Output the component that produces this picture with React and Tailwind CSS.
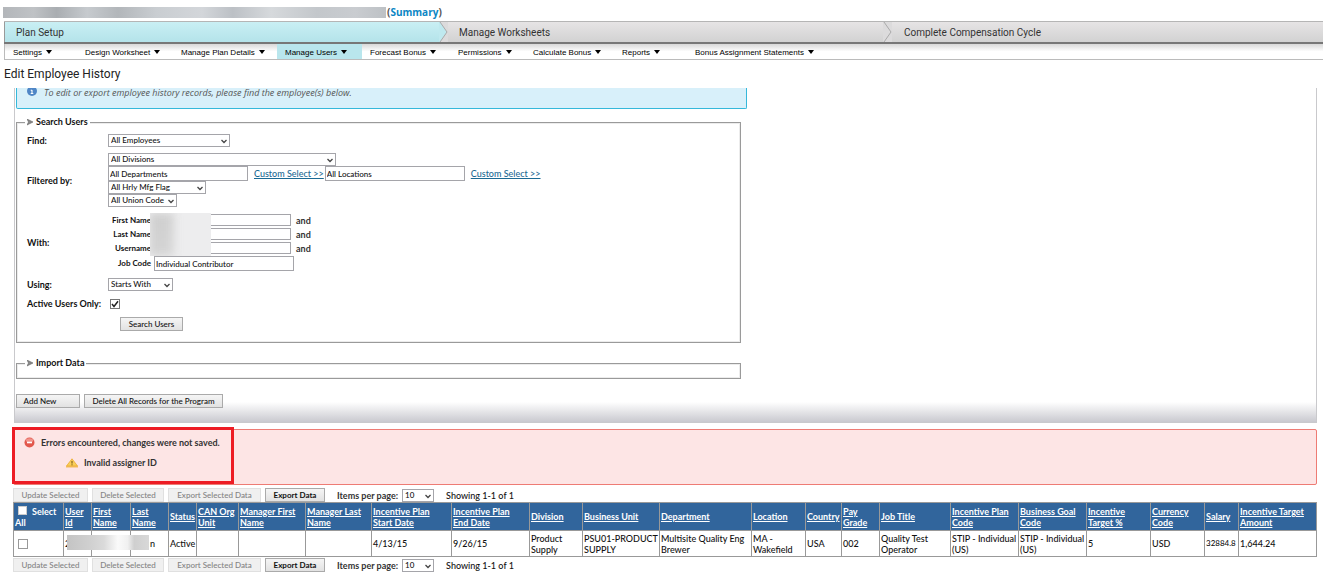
import clsx from 'clsx';

const menu = [
  { label: 'Settings', width: 'w-[72px]' },
  { label: 'Design Worksheet', width: 'w-[96px]' },
  { label: 'Manage Plan Details', width: 'w-[104px]' },
  { label: 'Manage Users', width: 'w-[85px]', active: true },
  { label: 'Forecast Bonus', width: 'w-[88px]' },
  { label: 'Permissions', width: 'w-[75px]' },
  { label: 'Calculate Bonus', width: 'w-[89px]' },
  { label: 'Reports', width: 'w-[73px]' },
  { label: 'Bonus Assignment Statements', width: 'w-[140px]' },
];

// One entry per table column. An empty cell is a field with no value.
const columns = [
  { head: 'User Id', width: 'w-[28px]', cell: '2' },
  { head: 'First Name', width: 'w-[39px]', cell: '' },
  { head: 'Last Name', width: 'w-[38px]', cell: 'n', right: true },
  { head: 'Status', width: 'w-[28px]', cell: 'Active' },
  { head: 'CAN Org Unit', width: 'w-[42px]', cell: '' },
  { head: 'Manager First Name', width: 'w-[67px]', cell: '' },
  { head: 'Manager Last Name', width: 'w-[66px]', cell: '' },
  { head: 'Incentive Plan\nStart Date', width: 'w-[80px]', cell: '4/13/15' },
  { head: 'Incentive Plan\nEnd Date', width: 'w-[78px]', cell: '9/26/15' },
  { head: 'Division', width: 'w-[53px]', cell: 'Product Supply' },
  { head: 'Business Unit', width: 'w-[77px]', cell: 'PSU01-PRODUCT SUPPLY' },
  { head: 'Department', width: 'w-[92px]', cell: 'Multisite Quality Eng Brewer' },
  { head: 'Location', width: 'w-[54px]', cell: 'MA - Wakefield' },
  { head: 'Country', width: 'w-[36px]', cell: 'USA' },
  { head: 'Pay Grade', width: 'w-[38px]', cell: '002' },
  { head: 'Job Title', width: 'w-[71px]', cell: 'Quality Test Operator' },
  { head: 'Incentive Plan Code', width: 'w-[68px]', cell: 'STIP - Individual (US)' },
  { head: 'Business Goal Code', width: 'w-[68px]', cell: 'STIP - Individual (US)' },
  { head: 'Incentive Target %', width: 'w-[64px]', cell: '5' },
  { head: 'Currency Code', width: 'w-[54px]', cell: 'USD' },
  { head: 'Salary', width: 'w-[34px]', cell: '32884.8', small: true },
  { head: 'Incentive Target Amount', width: 'w-[78px]', cell: '1,644.24' },
];

export default function App() {
  return (
    <div className="bg-white font-['Lato',sans-serif] text-[9px] leading-[11px] font-medium text-[#111]">
      <header className="flex h-[21px] items-center gap-px pt-[3px] pl-[3px]">
        <div className="h-[11px] w-[383px] bg-[linear-gradient(to_right,#b3b6ba_0%,#bfc2c5_8%,#a9adb1_14%,#c6cace_22%,#b2b6ba_30%,#c9cdd1_40%,#d3d6da_52%,#bcc0c5_60%,#d6d9dc_70%,#c3c7cb_82%,#c9ccd0_92%,#bdc1c5_100%)]" />
        <span className="font-['Open_Sans',sans-serif] text-[10px] font-bold text-[#555]">
          (<a href="#summary" className="text-[#0b86c4]">Summary</a>)
        </span>
      </header>

      <div className="ml-1">
        <Steps />
        <nav className="flex h-4 border-b border-l border-[#bbb] bg-linear-to-b from-[#d8d8d8] via-white via-50% to-white font-['Liberation_Sans',sans-serif] text-[8px] font-normal">
          {menu.map((m) => (
            <button
              key={m.label}
              type="button"
              className={clsx(
                'flex items-center gap-1 pt-px pl-2 whitespace-nowrap text-black',
                m.width,
                m.active && 'bg-[#b9e6ed]'
              )}
            >
              {m.label}
              <svg width="6" height="4" viewBox="0 0 6 4" aria-hidden="true">
                <path d="M0 0h6L3 4z" fill="#000" />
              </svg>
            </button>
          ))}
        </nav>
      </div>

      <h1 className="pl-1 pt-[7px] font-['Roboto',sans-serif] text-[12px] leading-[14px] font-normal text-[#222]">
        Edit Employee History
      </h1>

      <main className="mr-[6px] ml-[13px] pt-[7px]">
        <section className="ml-px border-x border-b border-[#c9c9cc] bg-[linear-gradient(to_top,#c9c9cf_0,#ffffff_20px)] pl-px">
          <div className="flex h-[21px] w-[731px] items-start gap-[7px] rounded-b-xs border-x border-b border-[#35b8da] bg-[#d8f0fa] pl-[10px]">
            <InfoIcon />
            <p className="font-['Open_Sans',sans-serif] leading-[9px] font-normal text-[#555] italic">
              To edit or export employee history records, please find the employee(s) below.
            </p>
          </div>

          <div className="w-[726px] pt-[7px]">
            <Panel title="Search Users">
              <SearchForm />
            </Panel>
            <div className="pt-[14px]">
              <Panel title="Import Data">
                <div className="h-[9px]" />
              </Panel>
            </div>
          </div>

          <div className="flex gap-1 pt-[15px] pb-[14px]">
            <Btn className="w-16 pr-4">Add New</Btn>
            <Btn className="w-[139px]">Delete All Records for the Program</Btn>
          </div>
        </section>

        <section role="alert" className="relative mt-[6px] h-[56px] rounded-xs border border-[#ee7b74] bg-[#fde5e5] pt-[7px]">
          <div className="flex items-center gap-[6px] pl-[10px] font-bold text-[#333]">
            <ErrorIcon />
            <span>Errors encountered, changes were not saved.</span>
          </div>
          <div className="flex items-center gap-[6px] pt-[9px] pl-[52px] font-bold text-[#333]">
            <WarnIcon />
            <span>Invalid assigner ID</span>
          </div>
          <div className="pointer-events-none absolute -top-[3px] -left-[2px] h-[57px] w-[222px] border-3 border-[#ed1c24]" />
        </section>

        <Toolbar id="items-top" className="pt-[3px]" />
        <Records />
        <Toolbar id="items-bottom" className="pt-px" />
      </main>
    </div>
  );
}

function Steps() {
  return (
    <ol className="flex h-[23px] border-t border-b-2 border-t-[#b5b5b5] border-b-[#777] bg-linear-to-b from-[#e6e4e5] to-[#d2d2d2] font-['Roboto',sans-serif] text-[10px] font-normal text-[#333]">
      <li className="flex w-[444px] items-center border-l border-[#999] bg-linear-to-b from-[#c9eff4] to-[#b4e3ea]">
        <span className="flex-1 pl-[11px]">Plan Setup</span>
        <StepArrow fill="#bfe9ef" />
      </li>
      <li className="flex w-[444px] items-center">
        <span className="flex-1 pl-[11px]">Manage Worksheets</span>
        <StepArrow fill="none" />
      </li>
      <li className="flex flex-1 items-center pl-3">Complete Compensation Cycle</li>
    </ol>
  );
}

function StepArrow({ fill }) {
  return (
    <svg width="9" height="20" viewBox="0 0 9 20" aria-hidden="true">
      <path d="M0 0h9v20H0z" fill="#dcdbdc" />
      <path d="M0 0h1l7 10-7 10H0z" fill={fill} />
      <path d="M1 0l7 10-7 10" fill="none" stroke="#aaa" />
    </svg>
  );
}

function Panel({ title, children }) {
  return (
    <fieldset className="mr-px border border-[#9a9a9a] shadow-[inset_0_0_0_1px_#ececec]">
      <legend className="ml-2 flex items-center gap-[3px] bg-white px-[2px] leading-[12px] font-bold">
        <svg width="6" height="7" viewBox="0 0 6 7" aria-hidden="true">
          <path d="M0 0l6 3-6 3 1.500-3z" fill="#888" stroke="#666" strokeWidth=".6" />
        </svg>
        {title}
      </legend>
      {children}
    </fieldset>
  );
}

function SearchForm() {
  return (
    <form className="grid grid-cols-[81px_1fr] items-center pt-[6px] pb-[11px] pl-[10px]">
      <label htmlFor="find" className="font-bold">Find:</label>
      <Select id="find" width="w-[122px]" value="All Employees" />

      <span className="pt-[6px] font-bold">Filtered by:</span>
      <div className="pt-[6px]">
        <Select label="Divisions" width="w-[228px]" value="All Divisions" />
        <div className="flex items-center">
          <TextBox label="Departments" className="h-[15px] w-[140px]" value="All Departments" />
          <CustomSelect className="pr-px pl-[6px]" />
          <TextBox label="Locations" className="h-[15px] w-[140px]" value="All Locations" />
          <CustomSelect className="pl-[6px]" />
        </div>
        <Select label="Hrly Mfg Flag" width="w-[98px]" value="All Hrly Mfg Flag" />
        <Select label="Union Code" width="w-[69px]" value="All Union Code" />
      </div>

      <span className="pt-[6px] font-bold">With:</span>
      <div className="relative flex flex-col gap-[2px] pt-[7px]">
        <NameRow id="first" label="First Name" />
        <NameRow id="last" label="Last Name" />
        <NameRow id="user" label="Username" />
        <div className="flex items-center gap-[3px]">
          <label htmlFor="job" className="w-[43px] text-right text-[8px] font-bold">Job Code</label>
          <TextBox id="job" className="h-[15px] w-[140px]" value="Individual Contributor" />
        </div>
        {/* privacy mask over the employee's names */}
        <div className="absolute top-[6px] left-[42px] h-[43px] w-[61px] overflow-hidden bg-[#ededee]">
          <div className="h-full w-6 bg-linear-to-br from-[#ccc] to-[#d8d8d8] blur-[4px]" />
        </div>
      </div>

      <label htmlFor="using" className="pt-[7px] font-bold">Using:</label>
      <div className="pt-[7px]">
        <Select id="using" width="w-[65px]" value="Starts With" />
      </div>

      <label htmlFor="active" className="pt-[7px] font-bold whitespace-nowrap">Active Users Only:</label>
      <div className="flex pt-[7px] pl-[2px]">
        <span className="relative flex">
          <input
            id="active"
            type="checkbox"
            defaultChecked
            className="peer size-[10px] appearance-none border border-[#777] bg-white"
          />
          <svg className="pointer-events-none absolute inset-0 hidden peer-checked:block" width="10" height="10" viewBox="0 0 10 10" aria-hidden="true">
            <path d="M2 5l2 2.500L8 2.200" fill="none" stroke="#222" strokeWidth="1.500" />
          </svg>
        </span>
      </div>

      <div className="col-start-2 pt-2 pl-3">
        <Btn className="w-[63px]">Search Users</Btn>
      </div>
    </form>
  );
}

function NameRow({ id, label }) {
  return (
    <div className="flex h-3 items-center gap-[3px] font-bold text-[#333]">
      <label htmlFor={id} className="flex w-[43px] justify-end text-[8px] whitespace-nowrap text-[#111]">{label}</label>
      <TextBox id={id} className="h-3 w-[137px]" value="" />
      <span className="pl-[2px]">and</span>
    </div>
  );
}

function TextBox({ id, label, value, className }) {
  return (
    <input
      id={id}
      type="text"
      aria-label={label}
      defaultValue={value}
      className={clsx('border border-[#a5a5aa] bg-white px-px text-[8px] font-medium text-[#111]', className)}
    />
  );
}

function CustomSelect({ className }) {
  return (
    <span className={className}>
      <a href="#custom" className="text-[#1c6a94] underline">Custom Select &gt;&gt;</a>
    </span>
  );
}

function Select({ id, label, value, width }) {
  return (
    <div className={clsx('relative', width)}>
      <select
        id={id}
        aria-label={label}
        className="block h-[13px] w-full appearance-none border border-[#a5a5aa] bg-white pl-[2px] text-[8px]"
      >
        <option>{value}</option>
      </select>
      <svg className="pointer-events-none absolute top-[5px] right-[3px]" width="6" height="5" viewBox="0 0 6 5" aria-hidden="true">
        <path d="M.5 1L3 3.500 5.500 1" fill="none" stroke="#444" strokeWidth="1.300" />
      </svg>
    </div>
  );
}

function Btn({ children, className, disabled }) {
  return (
    <button
      type="button"
      disabled={disabled}
      className={clsx(
        'flex h-[14px] items-center justify-center border text-[8px] whitespace-nowrap',
        disabled ? 'border-[#e0e0e0] bg-[#f0f0f0] text-[#838383]' : 'border-[#aaa] bg-linear-to-b from-[#f5f5f5] to-[#e2e2e2]',
        className
      )}
    >
      {children}
    </button>
  );
}

function Toolbar({ id, className }) {
  return (
    <div className={clsx('flex items-center gap-1', className)}>
      <Btn disabled className="w-[75px]">Update Selected</Btn>
      <Btn disabled className="w-[72px]">Delete Selected</Btn>
      <Btn disabled className="w-[93px]">Export Selected Data</Btn>
      <Btn className="w-[60px] font-bold">Export Data</Btn>
      <label htmlFor={id} className="pl-2 font-bold text-[#333]">Items per page:</label>
      <Select id={id} width="w-[32px]" value="10" />
      <span className="pl-2">Showing 1-1 of 1</span>
    </div>
  );
}

function Records() {
  return (
    <div className="relative">
      <table className="w-full table-fixed border-collapse text-left">
        <colgroup>
          <col className="w-[50px]" />
          {columns.map((c) => (
            <col key={c.head} className={c.width} />
          ))}
        </colgroup>
        <thead>
          <tr className="h-[28px] bg-[#31659c] text-white">
            <th className="border border-[#999] p-0 pl-px font-bold">
              <label>
                <input type="checkbox" className="mr-[5px] ml-[3px] size-[9px] appearance-none border border-[#ccc] bg-white" />
                Select All
              </label>
            </th>
            {columns.map((c) => (
              <th key={c.head} className="border border-[#999] p-0 pl-px font-bold whitespace-pre-line">
                <a href="#sort" className="underline">{c.head}</a>
              </th>
            ))}
          </tr>
        </thead>
        <tbody>
          <tr className="h-[26px]">
            <td className="border border-[#999] p-0 pl-1">
              <input type="checkbox" aria-label="Select record" className="block size-[10px] appearance-none border border-[#999] bg-white" />
            </td>
            {columns.map((c) => (
              <td
                key={c.head}
                className={clsx(
                  'border border-[#999] p-0 pl-px',
                  c.right && 'pr-[13px] text-right',
                  c.small && 'text-[8px]'
                )}
              >
                {c.cell}
              </td>
            ))}
          </tr>
        </tbody>
      </table>
      {/* privacy mask over id and names */}
      <div className="absolute top-[33px] left-[54px] h-[15px] w-[82px] bg-[linear-gradient(to_right,#c4c4c4_0%,#d0d0d0_28%,#dadada_45%,#fafafa_62%,#f0f0f0_74%,#cfcfcf_82%,#d8d8d8_100%)]" />
    </div>
  );
}

function InfoIcon() {
  return (
    <svg width="10" height="9" viewBox="0 0 10 9" aria-hidden="true">
      <circle cx="5" cy="3" r="5" fill="#4f86c6" />
      <path d="M5 2v3.500M3.700 2.200H5M3.700 5.500h2.600" stroke="#fff" strokeWidth="1.100" />
    </svg>
  );
}

function ErrorIcon() {
  return (
    <svg width="11" height="11" viewBox="0 0 11 11" aria-hidden="true">
      <circle cx="5.500" cy="5.500" r="5" fill="#e2574c" />
      <ellipse cx="5.500" cy="3.200" rx="3.600" ry="2" fill="#f0928a" />
      <path d="M3 5.500h5" stroke="#fff" strokeWidth="1.600" />
    </svg>
  );
}

function WarnIcon() {
  return (
    <svg width="12" height="10" viewBox="0 0 12 10" aria-hidden="true">
      <path d="M6 .8L11.500 8H.5z" fill="#f8cf5a" stroke="#eba92e" strokeWidth=".8" />
      <path d="M0 8.800h12" stroke="#f0b23c" strokeWidth="1.200" />
      <path d="M6 3v2.600M6 6.300v1" stroke="#6b4a10" />
    </svg>
  );
}
